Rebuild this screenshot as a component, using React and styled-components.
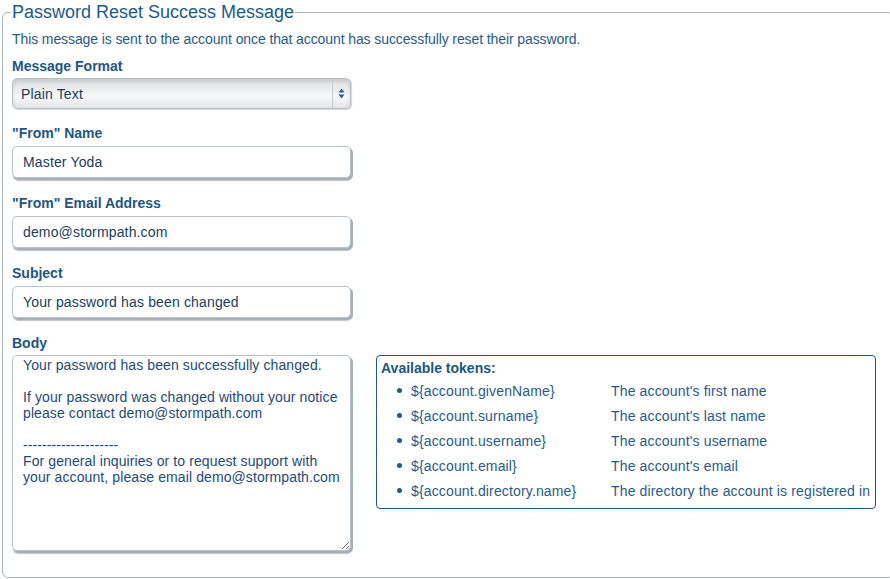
import React from "react";
import styled, { createGlobalStyle } from "styled-components";

const Global = createGlobalStyle`
  html, body { margin: 0; padding: 0; background: #fff; overflow: hidden; }
  body { font-family: "Liberation Sans", Arial, Helvetica, sans-serif; }
  * { box-sizing: border-box; }
`;

const Page = styled.div`
  width: 890px;
  height: 579px;
  overflow: hidden;
  padding-left: 2px;
`;

const Fieldset = styled.fieldset`
  margin: 0;
  width: 892px;
  height: 578px;
  border: 1px solid #aab6be;
  border-radius: 6px;
  padding: 7px 10px 0 9px;
`;

const Legend = styled.legend`
  font-size: 18px;
  line-height: 24px;
  color: #1d5a8b;
  padding: 0 1px;
  margin-left: -1px;
`;

const Intro = styled.p`
  margin: 0 0 11px;
  font-size: 14px;
  line-height: 16px;
  letter-spacing: -0.1px;
  color: #1f5b8c;
`;

const Group = styled.div`
  display: flex;
  flex-direction: column;
  gap: ${(p) => p.$gap || 5}px;
  margin-bottom: ${(p) => p.$after || 17}px;
`;

const Label = styled.label`
  font-size: 14px;
  line-height: 16px;
  font-weight: bold;
  color: #1c5688;
`;

const fieldBase = `
  width: 339px;
  border: 1px solid #b7c3cb;
  border-radius: 5px;
  font-family: "Liberation Sans", Arial, Helvetica, sans-serif;
  font-size: 14px;
  letter-spacing: 0.15px;
  color: #1b3d60;
  box-shadow: 2px 2px 0 0 #a6b0b7, 1px 3px 1px rgba(120,135,145,0.5);
  outline: none;
  background: #fff;
`;

const Input = styled.input`
  ${fieldBase}
  height: 32px;
  padding: 0 10px;
`;

const SelectWrap = styled.div`
  position: relative;
  width: 339px;
  height: 31px;
`;

const Select = styled.select`
  ${fieldBase}
  appearance: none;
  -webkit-appearance: none;
  height: 31px;
  padding: 0 8px;
  color: #1b3d60;
  border-color: #b9c3c9;
  box-shadow: inset 0 2px 4px rgba(0,0,0,0.12), 1px 1px 1px rgba(120,135,145,0.35);
  background: linear-gradient(#dcdfe1 0%, #f0f1f2 45%, #f7f8f8 60%, #e2e5e7 100%);
`;

const Arrows = styled.div`
  position: absolute;
  top: 1px;
  right: 1px;
  bottom: 1px;
  width: 18px;
  border-left: 1px solid #c6ccd0;
  display: flex;
  align-items: center;
  justify-content: center;
  pointer-events: none;
`;

const BodyRow = styled.div`
  display: flex;
  gap: 25px;
  align-items: flex-start;
`;

const TextArea = styled.textarea`
  ${fieldBase}
  color: #1d4b78;
  height: 196px;
  padding: 1px 2px 1px 10px;
  letter-spacing: 0.1px;
  line-height: 16px;
  resize: vertical;
  overflow: hidden;
`;

const Tokens = styled.div`
  width: 500px;
  border: 1px solid #1f5b8c;
  border-radius: 4px;
  padding: 4px 4px 5px;
  color: #1f5b8c;
`;

const TokensTitle = styled.div`
  font-size: 14px;
  line-height: 16px;
  font-weight: bold;
  color: #1c5688;
`;

const TokenList = styled.ul`
  list-style: none;
  margin: 2px 0 0;
  padding: 0 0 0 16px;
`;

const TokenItem = styled.li`
  display: grid;
  grid-template-columns: 14px 200px 1fr;
  align-items: center;
  height: 25px;
  font-size: 14px;
  letter-spacing: 0.15px;
  color: #1f5b8c;
  white-space: nowrap;
`;

const Bullet = styled.span`
  width: 5px;
  height: 5px;
  border-radius: 50%;
  background: #1f5b8c;
`;

const tokens = [
  ["${account.givenName}", "The account's first name"],
  ["${account.surname}", "The account's last name"],
  ["${account.username}", "The account's username"],
  ["${account.email}", "The account's email"],
  ["${account.directory.name}", "The directory the account is registered in"],
];

const bodyText = `Your password has been successfully changed.

If your password was changed without your notice
please contact demo@stormpath.com

--------------------
For general inquiries or to request support with
your account, please email demo@stormpath.com`;

export default function App() {
  return (
    <Page>
      <Global />
      <Fieldset>
        <Legend>Password Reset Success Message</Legend>
        <Intro>
          This message is sent to the account once that account has successfully reset their password.
        </Intro>
        <Group $gap={4} $after={16}>
          <Label>Message Format</Label>
          <SelectWrap>
            <Select defaultValue="plain">
              <option value="plain">Plain Text</option>
              <option value="html">HTML</option>
            </Select>
            <Arrows>
              <svg width="7" height="11" viewBox="0 0 7 11">
                <path d="M3.5 0.5 L6.5 4.5 H0.5 Z" fill="#2a5f95" />
                <path d="M3.5 10.5 L6.5 6.5 H0.5 Z" fill="#2a5f95" />
              </svg>
            </Arrows>
          </SelectWrap>
        </Group>
        <Group>
          <Label>"From" Name</Label>
          <Input defaultValue="Master Yoda" />
        </Group>
        <Group>
          <Label>"From" Email Address</Label>
          <Input defaultValue="demo@stormpath.com" />
        </Group>
        <Group>
          <Label>Subject</Label>
          <Input defaultValue="Your password has been changed" />
        </Group>
        <Group $gap={4} $after={0}>
          <Label>Body</Label>
          <BodyRow>
            <TextArea defaultValue={bodyText} />
            <Tokens>
              <TokensTitle>Available tokens:</TokensTitle>
              <TokenList>
                {tokens.map(([t, d]) => (
                  <TokenItem key={t}>
                    <Bullet />
                    <span>{t}</span>
                    <span>{d}</span>
                  </TokenItem>
                ))}
              </TokenList>
            </Tokens>
          </BodyRow>
        </Group>
      </Fieldset>
    </Page>
  );
}
